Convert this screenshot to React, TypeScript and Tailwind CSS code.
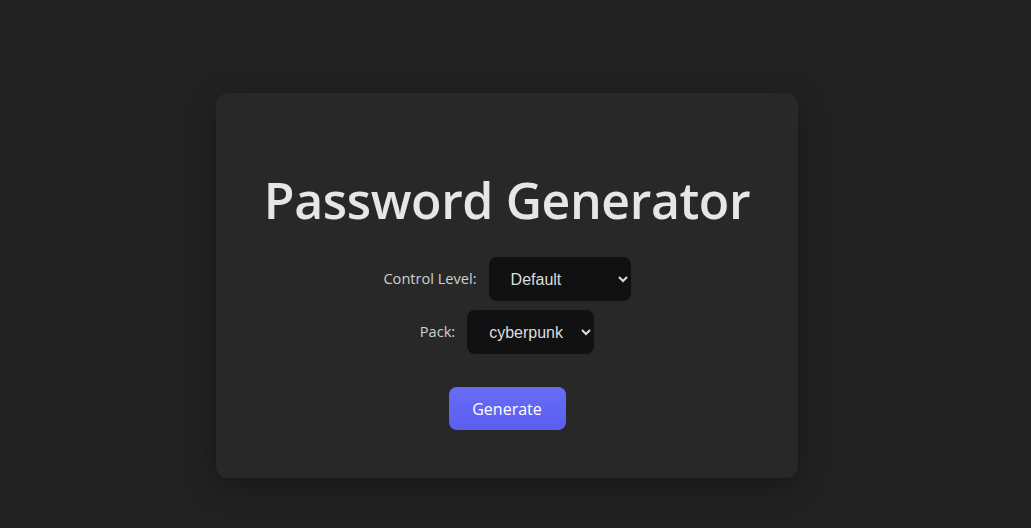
export default function App() {
  return (
    <div className="min-h-screen w-full bg-[#222222] pl-[216px] pt-[93px] font-['Open_Sans',sans-serif]">
      {/* Card */}
      <div className="flex w-[582px] flex-col items-center rounded-xl bg-[#282828] pt-[77px] pb-[48px] shadow-[0_8px_30px_rgba(0,0,0,0.35)]">
        <h1 className="text-[50px] leading-[60px] font-semibold tracking-[-0.4px] text-[#e6e6e6]">
          Password Generator
        </h1>

        <div className="mt-[27px] flex flex-col items-center gap-[9px]">
          <div className="flex items-center gap-3">
            <label className="text-[14.6px] text-[#d0d0d0]">Control Level:</label>
            <select
              defaultValue="default"
              className="h-[44px] w-[142px] rounded-lg bg-[#111111] pl-[18px] pr-[6px] font-['Liberation_Sans',Arial,sans-serif] text-[16px] text-[#dddddd] outline-none"
            >
              <option value="default">Default</option>
              <option value="advanced">Advanced</option>
              <option value="custom">Custom</option>
            </select>
          </div>

          <div className="flex items-center gap-3">
            <label className="text-[14.6px] text-[#d0d0d0]">Pack:</label>
            <select
              defaultValue="cyberpunk"
              className="h-[44px] w-[127px] rounded-lg bg-[#111111] pl-[18px] pr-[6px] font-['Liberation_Sans',Arial,sans-serif] text-[16px] text-[#dddddd] outline-none"
            >
              <option value="cyberpunk">cyberpunk</option>
              <option value="fantasy">fantasy</option>
              <option value="nature">nature</option>
            </select>
          </div>
        </div>

        <button className="mt-[33px] h-[43px] w-[117px] rounded-lg bg-gradient-to-b from-[#686cf6] to-[#5b5ef1] text-[16px] text-white">
          Generate
        </button>
      </div>
    </div>
  );
}
